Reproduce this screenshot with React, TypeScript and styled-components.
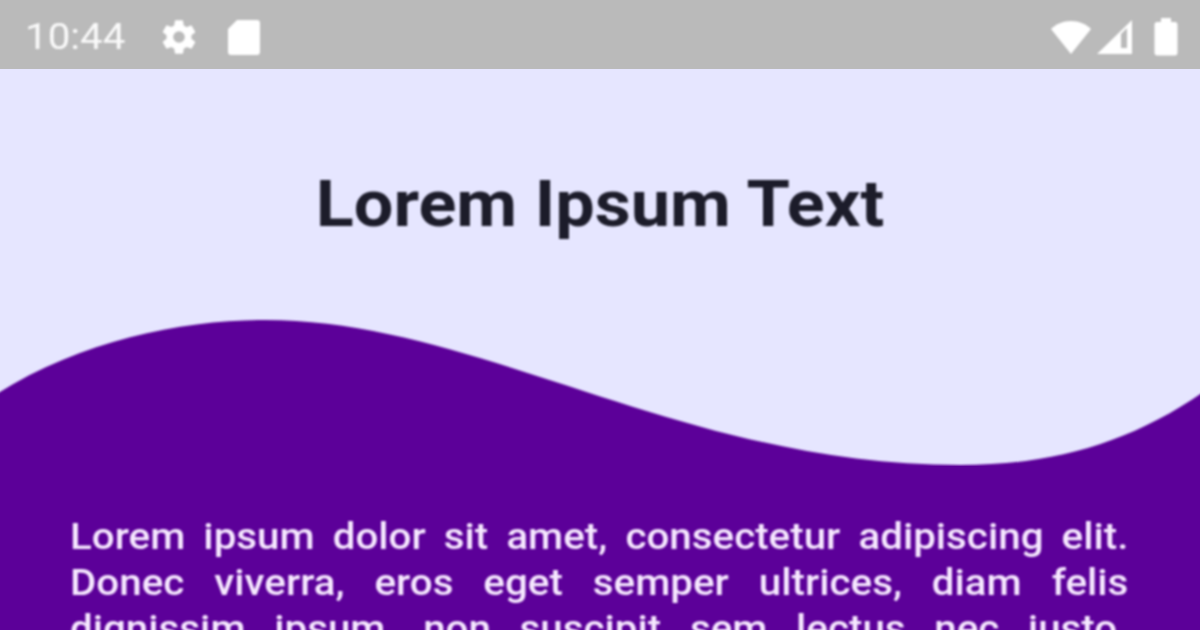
import styled, { createGlobalStyle } from "styled-components";

const GlobalStyle = createGlobalStyle`
  html, body {
    margin: 0;
    padding: 0;
    width: 1200px;
    height: 630px;
    overflow: hidden;
    background: #e6e6ff;
    font-family: Roboto, "Liberation Sans", sans-serif;
  }
`;

const Screen = styled.div`
  width: 1200px;
  height: 630px;
  display: flex;
  flex-direction: column;
  overflow: hidden;
`;

const StatusBar = styled.div`
  height: 69px;
  flex: none;
  background: #bababa;
  display: flex;
  align-items: center;
  justify-content: space-between;
  padding: 5px 22px 0 25px;
  box-sizing: border-box;
`;

const StatusGroup = styled.div<{ $gap: number }>`
  display: flex;
  align-items: center;
  gap: ${(p) => p.$gap}px;
  filter: blur(0.9px);
`;

const Clock = styled.span`
  display: inline-block;
  font-size: 36px;
  color: #fafafa;
  margin-right: 16px;
  transform: scaleX(1.12);
  transform-origin: left center;
`;

const Header = styled.div`
  height: 251px;
  flex: none;
  box-sizing: border-box;
  padding-top: 96px;
  text-align: center;
`;

const Title = styled.h1`
  margin: 0;
  font-size: 64px;
  line-height: 80px;
  font-weight: 700;
  color: #1c1c2a;
  transform: scaleX(1.097);
  filter: blur(0.8px);
`;

const Wave = styled.svg`
  display: block;
  flex: none;
  overflow: visible;
`;

const WaveShape = styled.path`
  fill: #5c0099;
  filter: blur(1px);
`;

const Body = styled.div`
  flex: 1;
  background: #5c0099;
  padding: 48px 0 0 70px;
`;

const Paragraph = styled.p`
  margin: 0;
  width: 971px;
  font-size: 37px;
  line-height: 46px;
  font-weight: 500;
  color: #f6e8ff;
  text-align: justify;
  transform: scaleX(1.09);
  transform-origin: left top;
  filter: blur(1px);
`;

const SignalSlot = styled.span`
  display: flex;
  margin-right: 16px;
`;

const GearIcon = () => (
  <svg width="40" height="40" viewBox="0 0 24 24" fill="#fff">
    <path d="M19.4 13c.04-.32.1-.66.1-1s-.06-.68-.1-1l2.1-1.6c.2-.15.25-.42.12-.64l-2-3.46c-.12-.22-.39-.3-.61-.22l-2.49 1c-.52-.4-1.08-.73-1.69-.98l-.38-2.65A.49.49 0 0 0 14 2h-4c-.25 0-.46.18-.49.42l-.38 2.65c-.61.25-1.17.59-1.69.98l-2.49-1c-.23-.09-.49 0-.61.22l-2 3.46c-.13.22-.07.49.12.64L4.57 11c-.04.32-.07.66-.07 1s.03.68.07 1l-2.11 1.65c-.19.15-.25.42-.12.64l2 3.46c.12.22.39.3.61.22l2.49-1c.52.4 1.08.73 1.69.98l.38 2.65c.03.24.24.42.49.42h4c.25 0 .46-.18.49-.42l.38-2.65c.61-.25 1.17-.59 1.69-.98l2.49 1c.23.09.49 0 .61-.22l2-3.46c.12-.22.07-.49-.12-.64L19.4 13zM12 15.500a3.500 3.500 0 1 1 0-7 3.500 3.500 0 0 1 0 7z" />
  </svg>
);

const CardIcon = () => (
  <svg width="34" height="37" viewBox="0 0 34 37" fill="#fff">
    <path d="M10 1h20c2 0 3 1.300 3 3v29c0 2-1.300 3-3 3H4c-2 0-3-1.300-3-3V10z" />
  </svg>
);

const WifiIcon = () => (
  <svg width="42" height="36" viewBox="0 0 42 36" fill="#fff">
    <path d="M21 35 1 10C6 5 13 2 21 2s15 3 20 8z" />
  </svg>
);

const SignalIcon = () => (
  <svg width="38" height="36" viewBox="0 0 38 36" fill="#fff">
    <path fillRule="evenodd" d="M36 1v34H1zM25 15v14h6V9z" />
  </svg>
);

const BatteryIcon = () => (
  <svg width="24" height="38" viewBox="0 0 24 38" fill="#fff">
    <path d="M7 0h10v4h4c1.500 0 2.500 1 2.500 2.500V35c0 1.500-1 2.500-2.500 2.500H3C1.500 37.500.5 36.500.5 35V6.500C.5 5 1.500 4 3 4h4z" />
  </svg>
);

const App = () => {
  return (
    <>
      <GlobalStyle />
      <Screen>
        <StatusBar>
          <StatusGroup $gap={28}>
            <Clock>10:44</Clock>
            <GearIcon />
            <CardIcon />
          </StatusGroup>
          <StatusGroup $gap={4}>
            <WifiIcon />
            <SignalSlot>
              <SignalIcon />
            </SignalSlot>
            <BatteryIcon />
          </StatusGroup>
        </StatusBar>
        <Header>
          <Title>Lorem Ipsum Text</Title>
        </Header>
        <Wave width="1200" height="146" viewBox="0 0 1200 146">
          <WaveShape d="M-20 85C70 22 180 0 265 0C480 0 680 145 960 145C1060 145 1140 120 1220 60V170H-20Z" />
        </Wave>
        <Body>
          <Paragraph>
            Lorem ipsum dolor sit amet, consectetur adipiscing elit. Donec
            viverra, eros eget semper ultrices, diam felis dignissim ipsum, non
            suscipit sem lectus nec justo. Pellentesque habitant morbi
            tristique senectus et netus et malesuada fames ac turpis egestas.
          </Paragraph>
        </Body>
      </Screen>
    </>
  );
};

export default App;
